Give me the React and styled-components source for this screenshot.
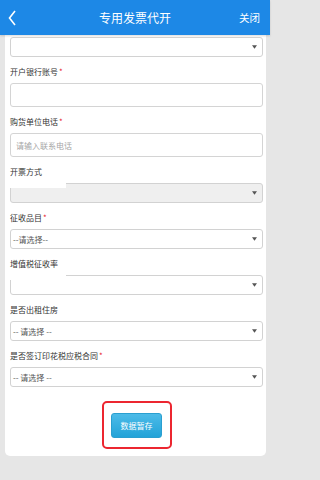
import React from 'react'
import styled, { createGlobalStyle } from 'styled-components';

const GlobalStyle = createGlobalStyle`
    html, body {
        margin: 0;
        padding: 0;
        background: #e6e6e6;
        font-family: "Noto Sans CJK SC", "Noto Sans", sans-serif;
    }
    * {
        box-sizing: border-box;
    }
`;

const fields = [
    { label: '开户银行账号', required: true, type: 'input', height: 24 },
    { label: '购货单位电话', required: true, type: 'input', height: 24, placeholder: '请输入联系电话' },
    { label: '开票方式', type: 'select', disabled: true, patch: true },
    { label: '征收品目', required: true, type: 'select', value: '--请选择--' },
    { label: '增值税征收率', type: 'select', patch: true },
    { label: '是否出租住房', type: 'select', value: '-- 请选择 --' },
    { label: '是否签订印花税应税合同', required: true, type: 'select', value: '-- 请选择 --' },
];

const Arrow = () => (
    <ArrowIcon viewBox="0 0 6 4">
        <path d="M0 0 L6 0 L3 4 Z" fill="#555" />
    </ArrowIcon>
);

const Select = ({ value, disabled, patch }) => (
    <SelectBox disabled={disabled}>
        <span>{value}</span>
        <Arrow />
        {patch && <Patch />}
    </SelectBox>
);

const App = () => {
    return (
        <>
            <GlobalStyle />
            <Page>
                <Header>
                    <Back viewBox="0 0 8 16">
                        <path d="M7 1 L1.5 8 L7 15" fill="none" stroke="#fff" strokeWidth="1.6" />
                    </Back>
                    <Title>专用发票代开</Title>
                    <Close>关闭</Close>
                </Header>
                <Card>
                    <Select />
                    {fields.map(f => (
                        <Group key={f.label}>
                            <Label>
                                {f.label}
                                {f.required && <Star>*</Star>}
                            </Label>
                            {f.type === 'input' ? (
                                <Input height={f.height}>
                                    {f.placeholder && <Placeholder>{f.placeholder}</Placeholder>}
                                </Input>
                            ) : (
                                <Select value={f.value} disabled={f.disabled} patch={f.patch} />
                            )}
                        </Group>
                    ))}
                    <Actions>
                        <Highlight>
                            <SaveButton>数据暂存</SaveButton>
                        </Highlight>
                    </Actions>
                </Card>
            </Page>
        </>
    )
}

const Page = styled.div`
    width: 270px;
    min-height: 480px;
    background: #e6e6e6;
`;

const Header = styled.div`
    height: 35px;
    background: #1d88e6;
    display: flex;
    align-items: center;
    justify-content: space-between;
    padding: 0 10px 0 8px;
    position: relative;
    box-shadow: 0 1px 2px rgba(0,0,0,.15);
`;

const Back = styled.svg`
    width: 8px;
    height: 16px;
`;

const Title = styled.div`
    position: absolute;
    left: 0;
    right: 0;
    text-align: center;
    color: #fff;
    font-size: 12px;
    pointer-events: none;
`;

const Close = styled.div`
    color: #fff;
    font-size: 10.5px;
`;

const Card = styled.div`
    margin: 0 4px 0 5px;
    padding: 2px 3px 7px 5px;
    background: #fff;
    border-radius: 0 0 5px 5px;
`;

const Group = styled.div`
    margin-top: 8px;
`;

const Label = styled.div`
    font-size: 8px;
    line-height: 14px;
    color: #333;
    margin-bottom: 4px;
`;

const Star = styled.span`
    color: #e8232b;
    margin-left: 1px;
`;

const Input = styled.div`
    height: ${p => p.height}px;
    border: 1px solid #d4d4d4;
    border-radius: 3px;
    display: flex;
    align-items: center;
    padding: 0 5px;
`;

const Placeholder = styled.span`
    font-size: 8px;
    color: #a6a6a6;
`;

const SelectBox = styled.div`
    position: relative;
    height: 20px;
    border: 1px solid #d2d2d2;
    border-radius: 3px;
    background: ${p => p.disabled ? '#efefef' : '#fff'};
    display: flex;
    align-items: center;
    justify-content: space-between;
    padding: 0 5px 0 2px;
    font-size: 8px;
    color: #555;
`;

const ArrowIcon = styled.svg`
    width: 5px;
    height: 4px;
    margin-left: auto;
`;

const Patch = styled.div`
    position: absolute;
    left: -3px;
    top: -2px;
    width: 58px;
    height: 6px;
    background: #fff;
`;

const Actions = styled.div`
    display: flex;
    justify-content: center;
    margin-top: 14px;
`;

const Highlight = styled.div`
    width: 70px;
    height: 48px;
    border: 2px solid #ec2630;
    border-radius: 5px;
    display: flex;
    align-items: center;
    justify-content: center;
`;

const SaveButton = styled.button`
    width: 51px;
    height: 25px;
    border: 1px solid #2a9fd0;
    border-radius: 3px;
    background: linear-gradient(#4cbbe8, #23a3d8);
    color: #fff;
    font-family: inherit;
    font-size: 8px;
    padding: 0;
`;

export default App
